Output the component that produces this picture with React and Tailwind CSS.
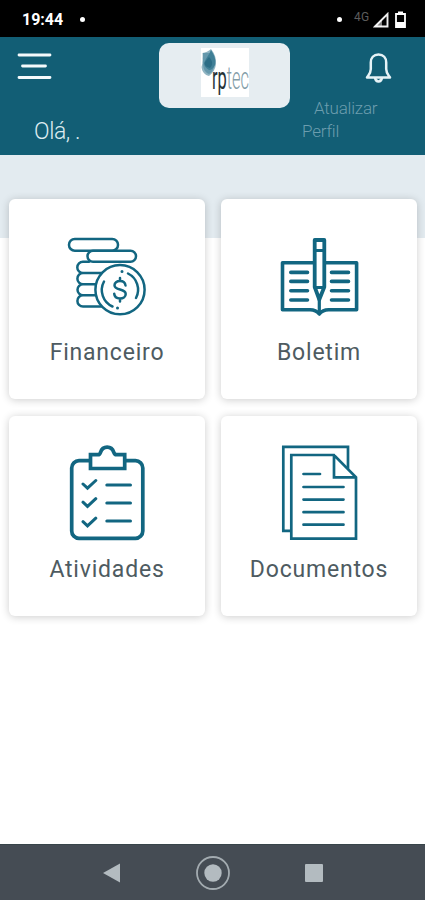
const tiles = [
  { label: 'Financeiro', Icon: CoinsIcon },
  { label: 'Boletim', Icon: BookIcon },
  { label: 'Atividades', Icon: ClipboardIcon },
  { label: 'Documentos', Icon: DocumentsIcon },
]

export default function App() {
  return (
    <div className="flex h-[900px] w-[425px] flex-col overflow-hidden bg-white font-['Roboto',sans-serif]">
      <StatusBar />
      <Header />

      <main className="flex-1 bg-[linear-gradient(#e3ebf0_83px,#fff_83px)] px-[9px] pt-11">
        <div className="grid grid-cols-[196px_196px] gap-x-4 gap-y-[17px]">
          {tiles.map((tile) => (
            <Tile key={tile.label} {...tile} />
          ))}
        </div>
      </main>

      <NavBar />
    </div>
  )
}

function StatusBar() {
  return (
    <div className="flex h-[37px] shrink-0 items-center bg-black pl-[22px] pr-[19px] pt-0.5 text-white">
      <span className="w-[42px] text-base font-bold leading-none">19:44</span>
      <span className="ml-4 size-[5px] rounded-full bg-white" />
      <span className="ml-auto size-[5px] rounded-full bg-white" />
      <span className="ml-3 -mt-1.5 w-[17px] text-xs leading-none tracking-[0.3px] text-[#5c5c5c]">4G</span>
      <svg className="ml-0.5 h-[16px] w-[16px]" viewBox="0 0 16 16">
        <path d="M2 14.500 14.500 2v12.500Z" fill="none" stroke="#eee" strokeWidth="1.900" />
        <path d="M1 15 9 7v8Z" fill="#fff" opacity=".5" />
      </svg>
      <svg className="ml-1.5 h-[17px] w-[11px]" viewBox="0 0 11 17">
        <path d="M1 3h9v13H1Z" fill="none" stroke="#fff" strokeWidth="1.8" />
        <path d="M3 .5h5V3H3ZM1 11h9v5H1Z" fill="#fff" />
      </svg>
    </div>
  )
}

function Header() {
  return (
    <header className="grid h-[118px] shrink-0 grid-cols-[159px_131px_1fr] bg-[#125e75] text-[#dcebf0]">
      <div className="flex flex-col">
        <svg
          className="ml-4 mt-3.5 h-[30px] w-[38px]"
          viewBox="0 0 38 30"
          fill="none"
          stroke="#f4fafc"
          strokeWidth="2.8"
          strokeLinecap="round"
        >
          <path d="M3 4h31M6.500 15h23M3 26.500h31" />
        </svg>
        <p className="ml-[34px] mt-[37px] text-[23px] font-light leading-7 tracking-[-0.4px]">Olá, .</p>
      </div>

      <div className="mt-1.5 flex h-[65px] items-start justify-center rounded-[10px] bg-[#e6edf1] pt-[5px]">
        <Logo />
      </div>

      <div className="flex flex-col">
        <svg
          className="ml-[74px] mt-[15px] h-[32px] w-[29px]"
          viewBox="0 0 29 32"
          fill="none"
          stroke="#e6f3f7"
          strokeWidth="2.500"
          strokeLinejoin="round"
        >
          <path d="M14.500 2.500c-5 0-7.700 3.500-7.700 8v6.500c0 4-1.300 5-3.800 8.500h23c-2.500-3.500-3.800-4.500-3.800-8.500v-6.500c0-4.500-2.700-8-7.700-8Z" />
          <path d="M11 25.500c.4 3 1.700 4 3.500 4s3.100-1 3.500-4" />
        </svg>
        <p className="ml-3 mt-[13px] w-[82px] indent-3 text-[17px] font-light leading-[23px] tracking-[-0.2px] text-[#6c9dae]">
          Atualizar Perfil
        </p>
      </div>
    </header>
  )
}

function Logo() {
  return (
    <svg className="h-[49px] w-[48px] bg-white" viewBox="0 0 48 49">
      <path d="M1.500 5c3-.5 6-1.500 8.500-4 4 5 5.500 10 5 15-.5 5-3 9-7 12-4-1-7-4-7.500-9 1.500-5 1.500-9 1-14Z" fill="#8fb4c2" />
      <path d="M2 5h7c4 4 5 9 4 14-1 4-3 6-5 7-5-2-7-6-6-21Z" fill="#6598ac" />
      <path d="M10 2c4 6 5 10 4 15-1 3-4 5-6 5-3-2-5-4-5-7 2-5 5-8 7-13Z" fill="#3f7f96" />
      <path d="M8 9c4 4 4 8 1 11-4-1-6-3-5-6Z" fill="#2c6d86" />
      <text transform="translate(11 41) scale(.53 1)" fontSize="31" fill="#263238">
        rp
        <tspan fontWeight="300" fill="#829ca7">tec</tspan>
      </text>
    </svg>
  )
}

function Tile({ label, Icon }) {
  return (
    <button className="flex h-[200px] flex-col items-center rounded-md bg-white pt-[27px] shadow-[0_1px_9px_rgba(0,0,0,0.2)]">
      <Icon />
      <span className="mt-[13px] text-[23px] leading-7 tracking-[0.8px] text-[#4e5b61]">{label}</span>
    </button>
  )
}

function TileIcon({ children, strokeWidth = 2.6 }) {
  return (
    <svg
      className="size-[100px] shrink-0"
      viewBox="0 0 100 100"
      fill="none"
      stroke="#126681"
      strokeWidth={strokeWidth}
      strokeLinecap="round"
    >
      {children}
    </svg>
  )
}

function CoinsIcon() {
  return (
    <TileIcon strokeWidth={2.5}>
      <rect x="12" y="13" width="49" height="11.700" rx="5.800" />
      <rect x="30.500" y="24.700" width="48.500" height="11" rx="5.500" />
      <path d="M32 35.700h-6a5.700 5.700 0 0 0 0 11.400h20M26 47.100a5.600 5.600 0 0 0 0 11.200h13M26 58.300a5.500 5.500 0 0 0 0 11h13M26 69.300a5.600 5.600 0 0 0 0 11.200h18" />
      <circle cx="63" cy="63.700" r="24.600" fill="#fff" />
      <path d="M71 47.500a18 18 0 0 1 8 24.500M47 55.500a18 18 0 0 0 8.500 25" />
      <path d="M68.500 59.500c-.3-3-2.400-4.500-5.500-4.500-3.300 0-5.500 1.700-5.500 4.300 0 5.800 11.200 2.700 11.200 8.700 0 2.700-2.300 4.500-5.700 4.500s-5.600-1.800-5.800-4.800M63 52v3M63 72.500v3" strokeWidth="2.500" />
      <path d="M65 45.500h.01M60.500 82h.01" strokeWidth="3" />
    </TileIcon>
  )
}

function BookIcon() {
  return (
    <TileIcon strokeWidth={3.6}>
      <path d="M45 36.700H13.500v47h27.500c4 0 7 1.300 9.300 4.300 2.300-3 5.300-4.300 9.300-4.300h28v-47H56" strokeLinejoin="round" />
      <path d="M21.800 46.400h16.700M21.800 55.400h16.700M21.800 64.700h16.700M21.800 74h16.700M62.500 46.400h17M62.500 55.400h17M62.500 64.700h17M62.500 74h17" />
      <path d="M45.700 14h9.600v47l-5 12.500-4.600-12.500Z" fill="#fff" strokeWidth="3.800" strokeLinejoin="round" />
      <path d="M45.700 24.500h9.600M46 61.500h8.600M50.300 72v14" strokeWidth="3.200" />
    </TileIcon>
  )
}

function ClipboardIcon() {
  return (
    <TileIcon strokeWidth={3.700}>
      <path d="M32 17.700H22a7.300 7.300 0 0 0-7.300 7.300v63a7.300 7.300 0 0 0 7.300 7.300h56.500a7.300 7.300 0 0 0 7.300-7.300V25a7.300 7.300 0 0 0-7.300-7.300h-10" />
      <path d="M33.500 25.500v-13.800h7.500c1.700 0 2-.9 2.500-2.400 2.300-6.800 11-6.800 13.300 0 .5 1.500 1 2.400 2.700 2.400h8.200v13.800Z" />
      <path d="m26 41 4.500 4.200 8.300-7.700M26 59.200l4.500 4.200 8.300-7.700M26 78.700l4.500 4.200 8.300-7.700" strokeWidth="3" />
      <path d="M49.800 42h23.700M49.800 60h23.700M49.800 78h23.700" strokeWidth="3" />
    </TileIcon>
  )
}

function DocumentsIcon() {
  return (
    <TileIcon strokeWidth={2.7}>
      <path d="M22.300 87.800h-8V3.800H79v22" strokeLinecap="butt" />
      <path d="M22.300 12H65l22 22.300v61.400H22.300ZM65 12v22.300h22" />
      <path d="M34.500 31H51M34.500 44h40M34.500 56.600h40M34.500 69.200h40M34.500 81.700h40" />
    </TileIcon>
  )
}

function NavBar() {
  return (
    <nav className="flex h-14 shrink-0 items-center justify-between border-t border-[#38454a] bg-[#454c54] px-[102px]">
      <svg className="h-5 w-[18px]" viewBox="0 0 18 20">
        <path d="M1 10 18 .5v19Z" fill="#b3bbc0" />
      </svg>
      <svg className="ml-px size-[34px]" viewBox="0 0 34 34">
        <circle cx="17" cy="17" r="16" fill="none" stroke="#a3abb0" strokeWidth="1.800" />
        <circle cx="17" cy="17" r="8.700" fill="#b3bbc0" />
      </svg>
      <span className="size-[18px] rounded-[1px] bg-[#b3bbc0]" />
    </nav>
  )
}
